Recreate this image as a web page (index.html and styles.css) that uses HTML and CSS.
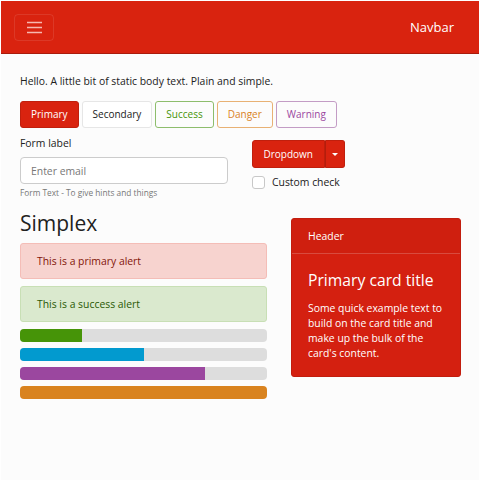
FILE: index.html
```html
<!DOCTYPE html>
<html lang="en">
<head>
<meta charset="utf-8">
<title>Simplex</title>
<link rel="stylesheet" href="styles.css">
</head>
<body>
<div class="frame">
  <nav class="navbar">
    <button class="toggler" type="button" aria-label="Toggle navigation">
      <svg width="15" height="13" viewBox="0 0 15 13"><path d="M0 1.5h15M0 6.5h15M0 11.5h15" stroke="#f6b8b0" stroke-width="1.6"/></svg>
    </button>
    <span class="brand">Navbar</span>
  </nav>
  <main class="container">
    <p class="lead-text">Hello. A little bit of static body text. Plain and simple.</p>
    <div class="btn-row">
      <button class="btn btn-primary">Primary</button>
      <button class="btn btn-secondary">Secondary</button>
      <button class="btn btn-outline-success">Success</button>
      <button class="btn btn-outline-danger">Danger</button>
      <button class="btn btn-outline-warning">Warning</button>
    </div>
    <div class="row row-form">
      <div class="col">
        <label class="form-label">Form label</label>
        <input class="form-control" type="email" placeholder="Enter email">
        <div class="form-text">Form Text - To give hints and things</div>
      </div>
      <div class="col col-right">
        <div class="btn-group">
          <button class="btn btn-primary btn-main">Dropdown</button>
          <button class="btn btn-primary btn-caret" aria-label="Toggle dropdown"><span class="caret"></span></button>
        </div>
        <label class="check"><span class="check-box"></span>Custom check</label>
      </div>
    </div>
    <div class="row row-main">
      <div class="col">
        <h1 class="title">Simplex</h1>
        <div class="alert alert-primary">This is a primary alert</div>
        <div class="alert alert-success">This is a success alert</div>
        <div class="progress"><div class="bar bar-success" style="width:25%"></div></div>
        <div class="progress"><div class="bar bar-info" style="width:50%"></div></div>
        <div class="progress"><div class="bar bar-warning" style="width:75%"></div></div>
        <div class="progress"><div class="bar bar-danger" style="width:100%"></div></div>
      </div>
      <div class="col">
        <div class="card">
          <div class="card-header">Header</div>
          <div class="card-body">
            <h4 class="card-title">Primary card title</h4>
            <p class="card-text">Some quick example text to build on the card title and make up the bulk of the card's content.</p>
          </div>
        </div>
      </div>
    </div>
  </main>
</div>
</body>
</html>
```

FILE: styles.css
```css
* { box-sizing: border-box; }
html, body { margin: 0; padding: 0; background: #ffffff; }
body {
  font-family: "Open Sans", "Noto Sans", sans-serif;
  font-size: 10.4px;
  line-height: 15px;
  color: #212121;
}
.frame {
  margin: 1px;
  width: 478px;
  height: 479px;
  background: #fcfcfc;
  overflow: hidden;
}
.navbar {
  height: 53px;
  background: #d9230f;
  border-bottom: 1px solid #a91b0c;
  display: flex;
  align-items: center;
  justify-content: space-between;
  padding: 0 25px 0 13px;
}
.toggler {
  width: 40px;
  height: 27px;
  margin-top: 1px;
  background: transparent;
  border: 1px solid rgba(255,255,255,0.1);
  border-radius: 4px;
  display: flex;
  align-items: center;
  justify-content: center;
  padding: 0;
}
.brand {
  color: #ffffff;
  font-size: 13px;
  margin-top: 1px;
}
.container {
  padding: 20px 17px 0 19px;
}
.lead-text { margin: 0 0 12px; }
.btn-row { display: flex; gap: 3px; }
.btn {
  font-family: inherit;
  font-size: 10px;
  line-height: 15px;
  padding: 5px 10px;
  border: 1px solid transparent;
  border-radius: 3px;
  background: transparent;
  cursor: pointer;
}
.btn-primary {
  background: #d9230f;
  border-color: #c01f0d;
  color: #fff;
}
.btn-secondary {
  background: #ffffff;
  border-color: #e6e6e6;
  color: #212121;
}
.btn-outline-success { color: #469408; border-color: #8dbd6c; }
.btn-outline-danger { color: #d9831f; border-color: #e8b174; }
.btn-outline-warning { color: #9b479f; border-color: #c39cc5; }

.row { display: grid; column-gap: 24px; }
.row-form { grid-template-columns: 208px 208px; margin-top: 8px; }
.row-main { grid-template-columns: 247px 170px; margin-top: 12px; }

.form-label { display: block; margin-bottom: 6px; }
.form-control {
  display: block;
  width: 100%;
  height: 27px;
  font-family: inherit;
  font-size: 10.4px;
  padding: 0 10px;
  border: 1px solid #cccccc;
  border-radius: 4px;
  background: #ffffff;
  color: #212121;
}
.form-control::placeholder { color: #777777; }
.form-text { font-size: 8.3px; line-height: 12px; color: #777777; margin-top: 3px; }

.col-right { padding-top: 4px; }
.btn-group { display: inline-flex; }
.btn-main { border-radius: 3px 0 0 3px; padding: 5px 10.5px; height: 28px; }
.btn-caret {
  width: 20px;
  height: 28px;
  border-radius: 0 3px 3px 0;
  border-left-color: #b41d0c;
  padding: 0;
  display: flex;
  align-items: center;
  justify-content: center;
}
.caret {
  width: 0; height: 0;
  border-left: 3px solid transparent;
  border-right: 3px solid transparent;
  border-top: 3px solid #fff;
}
.check {
  display: flex;
  align-items: center;
  gap: 7px;
  margin-top: 7px;
}
.check-box {
  width: 13px;
  height: 13px;
  border: 1px solid #c8c8c8;
  border-radius: 3px;
  background: #fff;
}

.title {
  margin: 0 0 7px;
  font-size: 21px;
  line-height: 25px;
  font-weight: 400;
}
.alert {
  padding: 9.5px 16px;
  border: 1px solid transparent;
  border-radius: 3px;
  margin-bottom: 7px;
}
.alert-primary { background: #f7d3cf; border-color: #f4bdb7; color: #821509; }
.alert-success { background: #dae9ce; border-color: #c8dfb5; color: #2a5905; }

.progress {
  height: 13px;
  background: #dddddd;
  border-radius: 4px;
  overflow: hidden;
  margin-bottom: 6px;
}
.bar { height: 100%; }
.bar-success { background: #469408; }
.bar-info { background: #029acf; }
.bar-warning { background: #9b479f; }
.bar-danger { background: #d9831f; }

.card {
  margin-top: 7px;
  background: #d42010;
  border: 1px solid #c21d0e;
  border-radius: 3px;
  color: #fff;
}
.card-header {
  padding: 9.5px 16px;
  background: rgba(0,0,0,0.02);
  border-bottom: 1px solid rgba(255,255,255,0.2);
}
.card-body { padding: 16px 16px 15px; }
.card-title {
  margin: 0 0 11px;
  font-size: 15.7px;
  line-height: 20px;
  font-weight: 400;
}
.card-text { margin: 0; }
```
